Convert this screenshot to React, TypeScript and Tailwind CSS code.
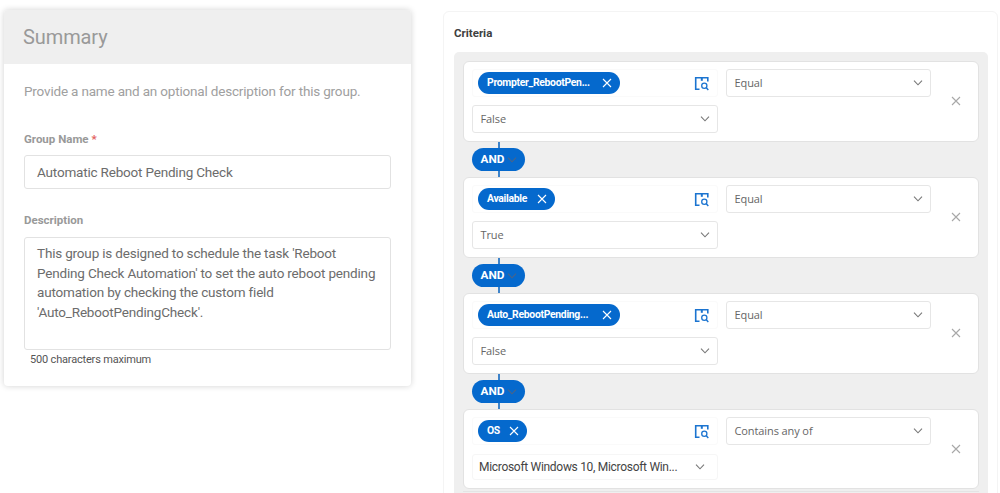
import React from "react";

function Chevron({ className = "" }: { className?: string }) {
  return (
    <svg viewBox="0 0 10 6" className={`h-[6px] w-[10px] shrink-0 ${className}`} fill="none" stroke="currentColor" strokeWidth="1.1">
      <path d="M1 0.7 L5 4.8 L9 0.7" />
    </svg>
  );
}

function Cross({ className = "" }: { className?: string }) {
  return (
    <svg viewBox="0 0 10 10" className={`shrink-0 ${className}`} fill="none" stroke="currentColor" strokeWidth="1.1">
      <path d="M1 1 L9 9 M9 1 L1 9" />
    </svg>
  );
}

function BrowseIcon() {
  return (
    <svg viewBox="0 0 15 15" className="h-[15px] w-[15px] shrink-0 text-[#1b74d0]" fill="none" stroke="currentColor">
      <path d="M5.5 13.3 H1.7 V1.7 H13.8 V5.5" strokeWidth="1.6" />
      <path d="M7.8 1 V4.8" strokeWidth="2" />
      <circle cx="10.3" cy="9.7" r="2.6" strokeWidth="1.3" />
      <path d="M12.1 11.6 L14.3 13.9" strokeWidth="1.5" />
    </svg>
  );
}

function Select({ value, className = "" }: { value: string; className?: string }) {
  return (
    <div className={`flex h-[28px] items-center justify-between rounded-[3px] border border-[#e6e6e6] bg-white pr-[7px] pl-[7.5px] font-['Open_Sans',sans-serif] text-[11px] tracking-[-0.1px] text-[#666] ${className}`}>
      <span>{value}</span>
      <Chevron className="text-[#777]" />
    </div>
  );
}

type Rule = { field: string; operator: string; value: string; chip: string; multi?: boolean };

const rules: Rule[] = [
  { field: "Prompter_RebootPen...", operator: "Equal", value: "False", chip: "w-[142px]" },
  { field: "Available", operator: "Equal", value: "True", chip: "w-[77px]" },
  { field: "Auto_RebootPending...", operator: "Equal", value: "False", chip: "w-[142px]" },
  { field: "OS", operator: "Contains any of", value: "Microsoft Windows 10, Microsoft Win...", chip: "w-[49px]", multi: true },
];

function RuleCard({ rule }: { rule: Rule }) {
  return (
    <div className={`flex rounded-[6px] border border-[#e2e2e2] bg-white pt-[7px] pl-[8px] ${rule.multi ? "h-[80px]" : "h-[81px]"}`}>
      <div className="w-[246px]">
        <div className="flex h-[28px] items-center justify-between rounded-[3px] border border-[#fafafa] pr-[8px] pl-[5px]">
          <div className={`flex h-[22px] items-center justify-between rounded-full bg-[#0569cd] pr-[8px] pl-[9px] text-[10.4px] font-bold tracking-[-0.3px] text-white ${rule.chip}`}>
            <span>{rule.field}</span>
            <Cross className="h-[10px] w-[10px]" />
          </div>
          <BrowseIcon />
        </div>
        {rule.multi ? (
          <div className="mt-[9px] flex h-[26px] items-center justify-between rounded-[3px] border border-[#f6f6f6] pr-[12px] pl-[6px] text-[12px] tracking-[-0.3px] text-[#444]">
            <span>{rule.value}</span>
            <Chevron className="text-[#777]" />
          </div>
        ) : (
          <Select value={rule.value} className="mt-[8px]" />
        )}
      </div>
      <Select value={rule.operator} className="ml-[8px] w-[205px]" />
      <Cross className="mt-[27px] ml-[20px] h-[10px] w-[10px] text-[#a8a8a8]" />
    </div>
  );
}

function Connector() {
  return (
    <div className="ml-[9px] flex h-[35px] w-[53px] flex-col">
      <div className="ml-[26px] h-[6px] w-[2px] bg-[#3d83ca]" />
      <div className="flex h-[23px] items-center rounded-full bg-[#0569cd] pl-[8.5px] text-[11.8px] font-bold text-white">
        AND
        <Chevron className="ml-[3px] text-[#4d6486]" />
      </div>
      <div className="ml-[26px] h-[6px] w-[2px] bg-[#3d83ca]" />
    </div>
  );
}

export default function App() {
  return (
    <div className="flex h-[493px] w-[1000px] items-start overflow-hidden bg-white font-['Roboto',sans-serif]">
      <section className="mt-[10px] ml-[4px] h-[376px] w-[407px] shrink-0 overflow-hidden rounded-[4px] bg-white shadow-[0_0_6px_rgba(0,0,0,0.18)]">
        <h1 className="flex h-[54px] items-center bg-[#efefef] pl-[19px] text-[20px] tracking-[-0.1px] text-[#999]">Summary</h1>
        <div className="px-[20px]">
          <p className="mt-[17px] text-[13.5px] leading-[20px] tracking-[-0.18px] whitespace-nowrap text-[#a0a0a0]">Provide a name and an optional description for this group.</p>
          <div className="mt-[30px] text-[11.5px] leading-[16px] font-bold text-[#999]">
            Group Name <span className="text-[#e26060]">*</span>
          </div>
          <div className="mt-[8px] flex h-[34px] items-center rounded-[3px] border border-[#e2e2e2] pl-[12px] text-[13.5px] tracking-[-0.19px] text-[#6c6c6c]">Automatic Reboot Pending Check</div>
          <div className="mt-[23px] text-[11.5px] leading-[16px] font-bold text-[#999]">Description</div>
          <div className="mt-[9px] h-[113px] rounded-[3px] border border-[#e2e2e2] pt-[6px] pl-[12px] text-[13.5px] leading-[19.7px] tracking-[-0.18px] whitespace-nowrap text-[#6c6c6c]">
            This group is designed to schedule the task 'Reboot
            <br />
            Pending Check Automation' to set the auto reboot pending
            <br />
            automation by checking the custom field
            <br />
            'Auto_RebootPendingCheck'.
          </div>
          <p className="mt-[2px] ml-[6px] text-[11px] leading-[16px] tracking-[-0.18px] text-[#555]">500 characters maximum</p>
        </div>
      </section>
      <section className="mt-[11px] ml-[32px] h-[500px] w-[555px] shrink-0 rounded-[6px] border border-[#f4f4f4] px-[10px]">
        <h2 className="mt-[13px] text-[11.5px] leading-[16px] font-bold text-[#404040]">Criteria</h2>
        <div className="mt-[11px] h-[460px] w-[534px] rounded-t-[5px] bg-[#efefef] pt-[9px] pr-[9px] pl-[9px]">
          {rules.map((rule, i) => (
            <React.Fragment key={i}>
              {i > 0 && <Connector />}
              <RuleCard rule={rule} />
            </React.Fragment>
          ))}
          <div className="mt-[2px] h-px bg-[#e4e4e4]" />
        </div>
      </section>
    </div>
  );
}
